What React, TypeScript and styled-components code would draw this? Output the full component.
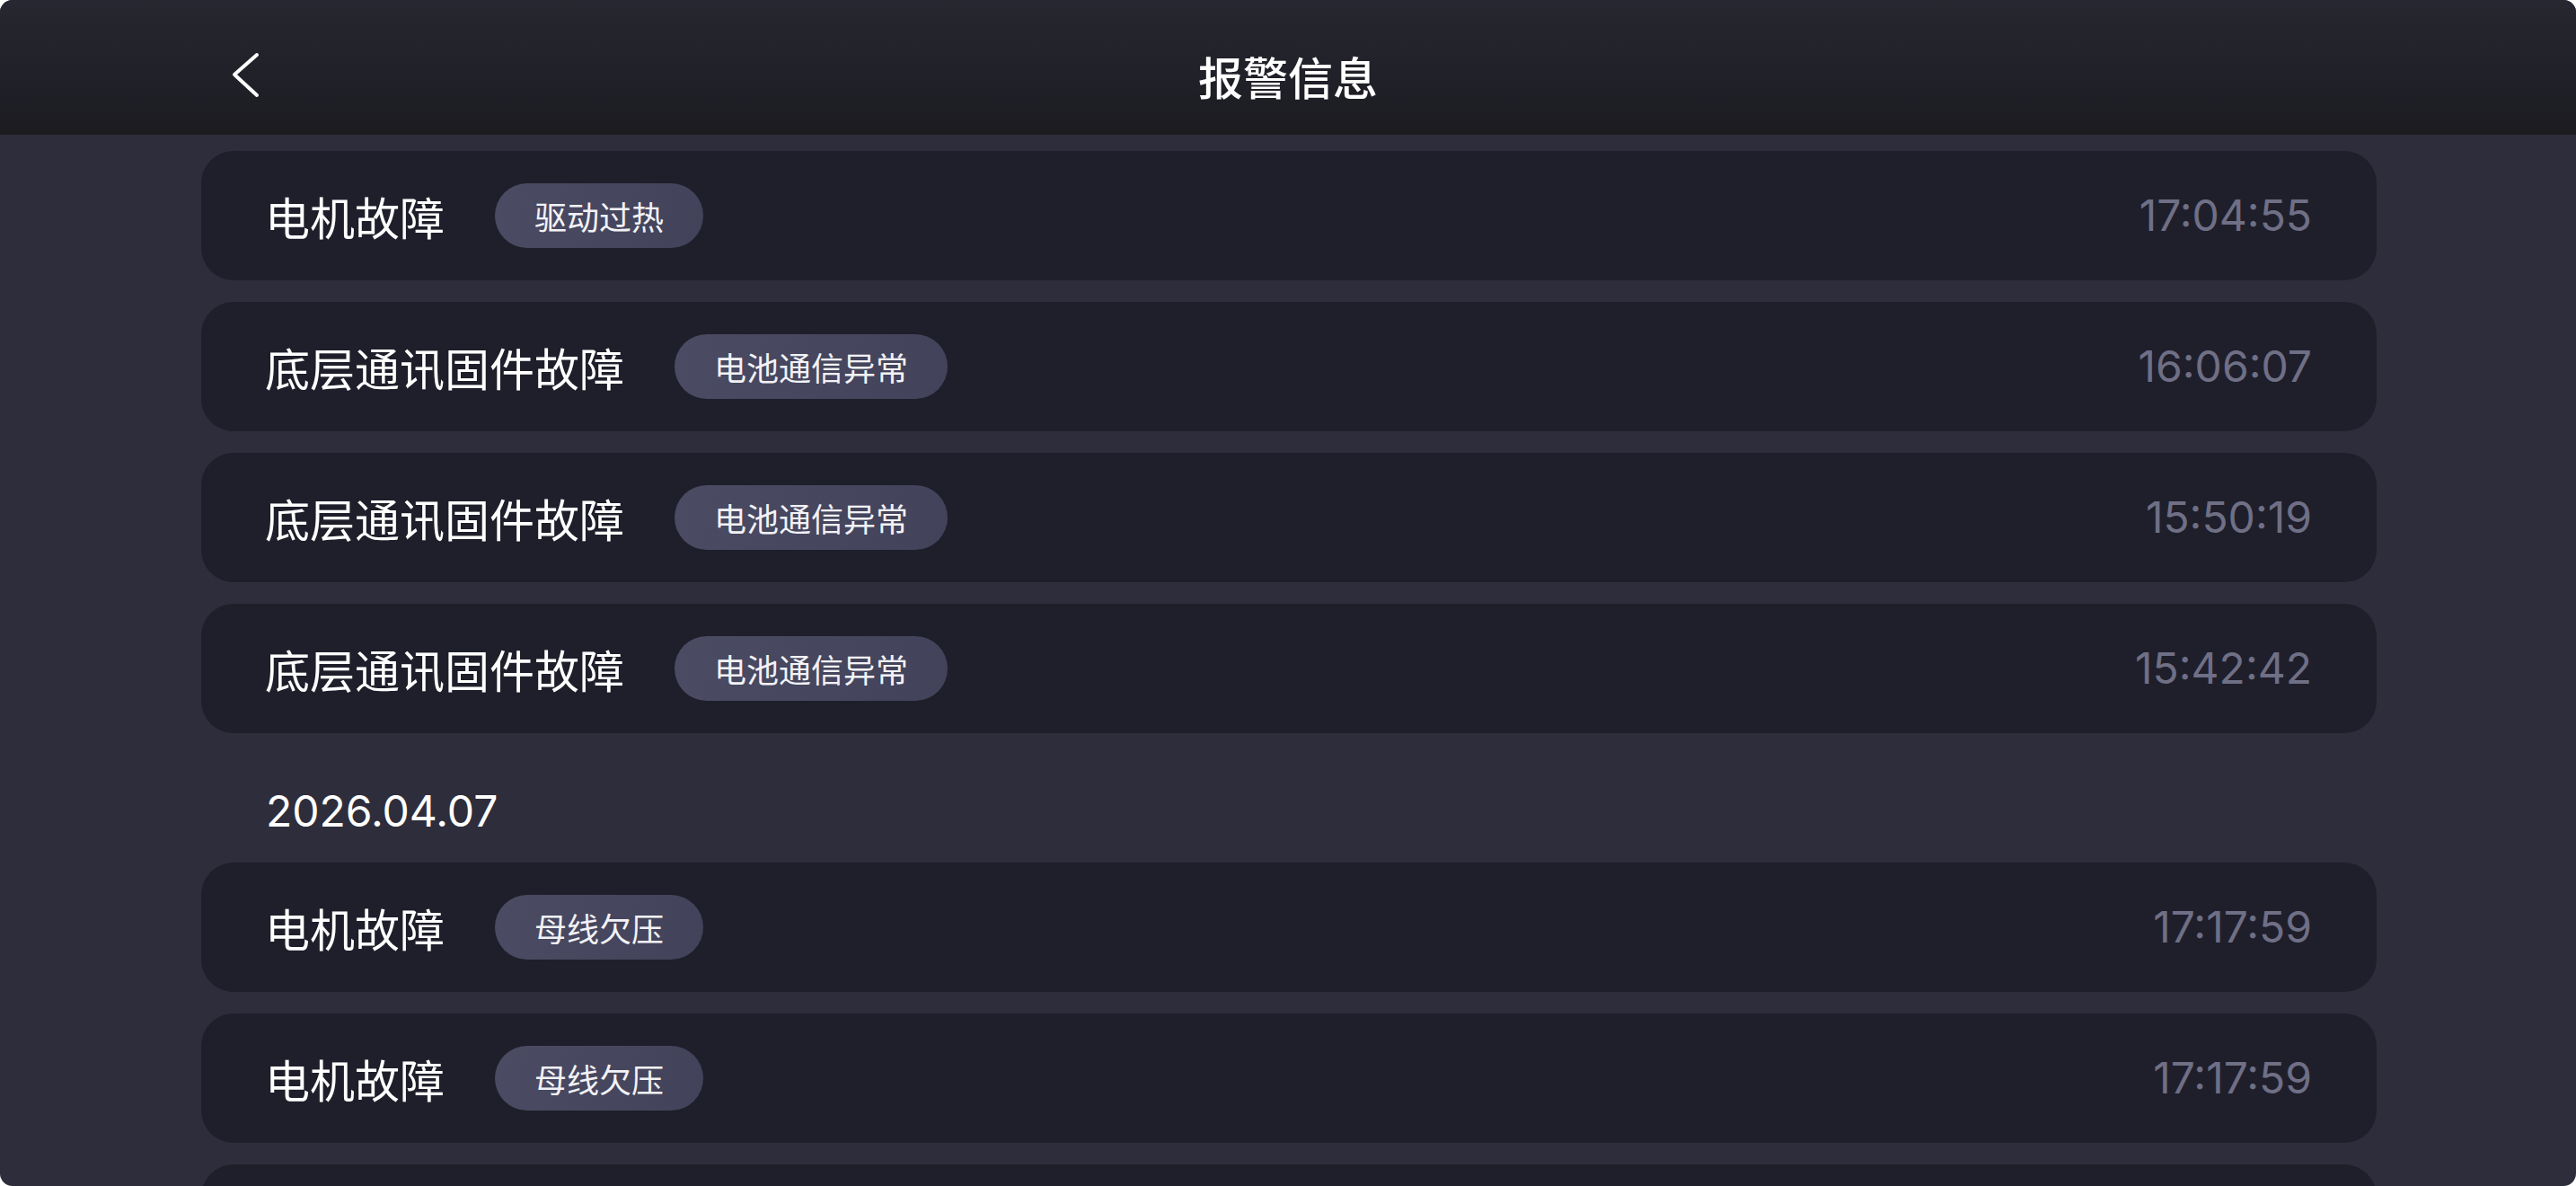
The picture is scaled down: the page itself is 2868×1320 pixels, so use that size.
import React from "react";
import styled, { createGlobalStyle } from "styled-components";

type Alarm = { title: string; tag: string; time: string };
type Group = { date?: string; items: Alarm[]; more?: boolean };

const groups: Group[] = [
  {
    items: [
      { title: "电机故障", tag: "驱动过热", time: "17:04:55" },
      { title: "底层通讯固件故障", tag: "电池通信异常", time: "16:06:07" },
      { title: "底层通讯固件故障", tag: "电池通信异常", time: "15:50:19" },
      { title: "底层通讯固件故障", tag: "电池通信异常", time: "15:42:42" },
    ],
  },
  {
    date: "2026.04.07",
    items: [
      { title: "电机故障", tag: "母线欠压", time: "17:17:59" },
      { title: "电机故障", tag: "母线欠压", time: "17:17:59" },
    ],
    more: true,
  },
];

function App() {
  return (
    <>
      <GlobalStyle />
      <Screen>
        <Header>
          <BackButton aria-label="back">
            <svg width="34" height="54" viewBox="0 0 34 54" fill="none">
              <path
                d="M29 4 L4 26 L29 49"
                stroke="#ffffff"
                strokeWidth="4"
                strokeLinecap="round"
                strokeLinejoin="round"
              />
            </svg>
          </BackButton>
          <Title>报警信息</Title>
        </Header>

        <List>
          {groups.map((g, gi) => (
            <React.Fragment key={gi}>
              {g.date && <DateLabel>{g.date}</DateLabel>}
              {g.items.map((a, i) => (
                <Card key={i}>
                  <CardTitle>{a.title}</CardTitle>
                  <Tag>{a.tag}</Tag>
                  <Time>{a.time}</Time>
                </Card>
              ))}
              {/* next row, scrolled below the fold */}
              {g.more && <Card />}
            </React.Fragment>
          ))}
        </List>
      </Screen>
    </>
  );
}

const GlobalStyle = createGlobalStyle`
  html, body {
    margin: 0;
    padding: 0;
    background: #ffffff;
    overflow: hidden;
  }
  * { box-sizing: border-box; }
`;

const Screen = styled.div`
  width: 2868px;
  height: 1320px;
  border-radius: 14px;
  overflow: hidden;
  background: #2e2d3b;
  font-family: "Noto Sans CJK SC", "Noto Sans", sans-serif;
  display: flex;
  flex-direction: column;
`;

const Header = styled.div`
  position: relative;
  flex: none;
  height: 150px;
  padding-top: 18px;
  display: flex;
  align-items: center;
  justify-content: center;
  background: linear-gradient(180deg, #272731 0%, #202028 60%, #1b1b20 100%);
`;

const BackButton = styled.button`
  position: absolute;
  left: 257px;
  top: 57px;
  width: 34px;
  height: 54px;
  padding: 0;
  border: 0;
  background: none;
  display: flex;
`;

const Title = styled.div`
  color: #ffffff;
  font-size: 50px;
  font-weight: 500;
  line-height: 1;
`;

const List = styled.div`
  display: flex;
  flex-direction: column;
  gap: 24px;
  padding: 18px 222px 0 224px;
`;

const DateLabel = styled.div`
  height: 96px;
  padding: 30px 0 0 72px;
  display: flex;
  align-items: center;
  color: #ffffff;
  font-family: "Inter", "Noto Sans", sans-serif;
  font-size: 48px;
  line-height: 1;
`;

const Card = styled.div`
  flex: none;
  height: 144px;
  border-radius: 36px;
  background: #1f1f2b;
  display: flex;
  align-items: center;
  padding: 0 72px 0 71px;
`;

const CardTitle = styled.div`
  color: #ffffff;
  font-size: 50px;
  line-height: 1;
`;

const Tag = styled.div`
  margin-left: 56px;
  height: 72px;
  padding: 0 44px;
  border-radius: 36px;
  background: linear-gradient(100deg, #4b4b63 0%, #42425a 100%);
  display: flex;
  align-items: center;
  color: #f2f2f6;
  font-size: 36px;
  line-height: 1;
`;

const Time = styled.div`
  margin-left: auto;
  color: #6f6f86;
  font-family: "Inter", "Noto Sans", sans-serif;
  font-size: 48px;
  line-height: 1;
`;

export default App;
